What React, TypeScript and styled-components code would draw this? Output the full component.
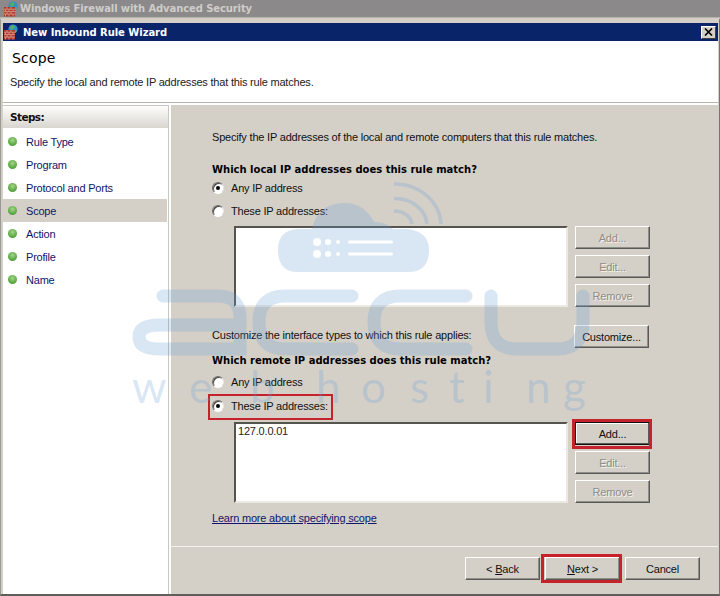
import styled, { createGlobalStyle } from 'styled-components';

const GlobalStyle = createGlobalStyle`
  html, body { margin: 0; padding: 0; background: #d4d0c8; }
  * { box-sizing: border-box; }
`;

const uiFont = `"Liberation Sans", sans-serif`;
const boldFont = `"DejaVu Sans", "Liberation Sans", sans-serif`;

const Page = styled.div`
  position: relative;
  width: 720px;
  height: 596px;
  overflow: hidden;
  display: flex;
  flex-direction: column;
  background: #d4d0c8;
  font-family: ${uiFont};
  font-size: 11px;
  letter-spacing: -0.2px;
  color: #111;
`;

const ParentBar = styled.div`
  height: 18px;
  flex: none;
  display: flex;
  align-items: center;
  gap: 0;
  padding-left: 3px;
  background: #8b8989;
  border-bottom: 1px solid #b5b2ab;
  color: #cfcdc9;
  font-family: ${boldFont};
  font-size: 10px;
  font-weight: 700;
  letter-spacing: -0.1px;
`;

const WindowFrame = styled.div`
  flex: 1;
  min-height: 0;
  display: flex;
  flex-direction: column;
  border-top: 2px solid #d4d0c8;
  border-left: 1px solid #9a9a96;
  border-right: 1px solid #77756f;
  border-bottom: 2px solid #5f5e5a;
  background: #d4d0c8;
  padding: 3px 1px 0 2px;
`;

const TitleBar = styled.div`
  height: 18px;
  flex: none;
  display: flex;
  align-items: center;
  padding: 0 2px 0 0;
  gap: 3px;
  background: #0a246a;
  color: #fff;
  font-family: ${boldFont};
  font-size: 10px;
  font-weight: 700;
  letter-spacing: -0.05px;
`;

const TitleText = styled.span`
  flex: 1;
`;

const CloseButton = styled.div`
  width: 15px;
  height: 13px;
  display: flex;
  align-items: center;
  justify-content: center;
  background: #d4d0c8;
  border: 1px solid;
  border-color: #fff #404040 #404040 #fff;
`;

const WizardHeader = styled.div`
  height: 62px;
  flex: none;
  background: #fff;
  border-bottom: 1px solid #b8b5ad;
  padding: 8px 0 0 9px;
`;

const HeaderTitle = styled.div`
  font-family: ${boldFont};
  font-size: 14px;
  letter-spacing: 0.2px;
  line-height: 18px;
  color: #000;
`;

const HeaderText = styled.div`
  margin: 8px 0 0 -2px;
  line-height: 14px;
  color: #222;
`;

const WizardBody = styled.div`
  flex: 1;
  min-height: 0;
  display: flex;
  background: #fff;
`;

const Sidebar = styled.div`
  width: 168px;
  flex: none;
  padding: 2px 2px 0 0;
  background: #fff;
`;

const StepsPane = styled.div`
  height: 100%;
  border-top: 1px solid #c9c6bf;
  border-right: 1px solid #c9c6bf;
`;

const StepsHeader = styled.div`
  height: 22px;
  display: flex;
  align-items: center;
  padding-left: 7px;
  background: linear-gradient(#fdfdfc, #d9d6d0);
  font-family: ${boldFont};
  font-size: 10.5px;
  font-weight: 700;
  letter-spacing: -0.6px;
  color: #111;
  margin-bottom: 2px;
`;

const StepRow = styled.div<{ $active?: boolean }>`
  height: 23px;
  display: flex;
  align-items: center;
  gap: 9px;
  padding-left: 5px;
  margin-right: 1px;
  color: #10166a;
  background: ${(p) => (p.$active ? '#d4d0c8' : 'transparent')};
`;

const StepBullet = styled.span`
  width: 9px;
  height: 9px;
  border-radius: 50%;
  flex: none;
  background: radial-gradient(circle at 50% 35%, #a5d58a, #5cab45 60%, #3f8a33);
`;

const MainPanel = styled.div`
  flex: 1;
  min-width: 0;
  margin-top: 2px;
  display: flex;
  flex-direction: column;
  background: #d4d0c8;
`;

const MainContent = styled.div`
  flex: 1;
  padding: 25px 0 0 41px;
`;

const BodyText = styled.div`
  line-height: 14px;
`;

const Intro = styled(BodyText)`
  height: 14px;
`;

const Heading = styled.div<{ $top: number }>`
  margin-top: ${(p) => p.$top}px;
  line-height: 14px;
  font-family: ${boldFont};
  font-size: 10px;
  font-weight: 700;
  letter-spacing: 0;
  color: #000;
`;

const RadioRow = styled.div<{ $top: number; $marked?: boolean }>`
  position: relative;
  margin-top: ${(p) => p.$top}px;
  height: 14px;
  width: 113px;
  display: flex;
  align-items: center;
  gap: 7px;
  white-space: nowrap;
  ${(p) =>
    p.$marked &&
    `&::before {
      content: '';
      position: absolute;
      box-sizing: border-box;
      left: -4px;
      top: -5px;
      width: 125px;
      height: 26px;
      border: 2.5px solid #c5222b;
    }`}
`;

const RadioCircle = styled.span<{ $checked?: boolean }>`
  width: 12px;
  height: 12px;
  flex: none;
  border-radius: 50%;
  background: #fff;
  border: 1px solid;
  border-color: #6f6d68 #e8e6e1 #fff #6f6d68;
  box-shadow: inset 1px 1px 0 #444;
  display: flex;
  align-items: center;
  justify-content: center;
  &::after {
    content: '';
    width: 4px;
    height: 4px;
    border-radius: 50%;
    background: ${(p) => (p.$checked ? '#000' : 'transparent')};
  }
`;

const ListGroup = styled.div<{ $top: number }>`
  margin: ${(p) => p.$top}px 0 0 22px;
  display: flex;
  gap: 7px;
`;

const ListBox = styled.div`
  width: 334px;
  height: 81px;
  background: #fff;
  border: 2px solid;
  border-color: #55544f #ece9e3 #ece9e3 #55544f;
  padding: 0 2px;
  line-height: 14px;
  color: #222;
`;

const ButtonColumn = styled.div`
  display: flex;
  flex-direction: column;
  gap: 6px;
`;

const WinButton = styled.div<{ $disabled?: boolean; $focused?: boolean; $ring?: string }>`
  position: relative;
  width: 75px;
  height: 23px;
  flex: none;
  display: flex;
  align-items: center;
  justify-content: center;
  background: #d4d0c8;
  border: 1px solid;
  border-color: ${(p) => (p.$focused ? '#111' : '#fff #5a5955 #5a5955 #fff')};
  box-shadow: ${(p) =>
    p.$focused ? 'inset -1px -1px 0 #5a5955, inset 1px 1px 0 #fff' : 'inset -1px -1px 0 #8f8d87'};
  color: ${(p) => (p.$disabled ? '#8f8d87' : '#111')};
  text-shadow: ${(p) => (p.$disabled ? '1px 1px 0 #f4f3ef' : 'none')};
  ${(p) =>
    p.$ring &&
    `&::before {
      content: '';
      position: absolute;
      inset: ${p.$ring};
      border: 3px solid #c5222b;
    }`}
`;

const CustomizeRow = styled.div`
  margin-top: 18px;
  width: 437px;
  display: flex;
  justify-content: space-between;
`;

const CustomizeText = styled(BodyText)`
  padding-top: 3px;
`;

const LearnLink = styled.a`
  display: block;
  margin-top: 8px;
  line-height: 14px;
  color: #10166a;
  text-decoration: underline;
`;

const Footer = styled.div`
  height: 48px;
  flex: none;
  display: flex;
  justify-content: flex-end;
  gap: 5px;
  padding: 10px 18px 0 0;
  border-top: 1px solid #f4f3ef;
`;

const Underlined = styled.span`
  text-decoration: underline;
`;

const Watermark = styled.svg`
  position: absolute;
  left: 0;
  top: 0;
  width: 720px;
  height: 596px;
  pointer-events: none;
`;

const WatermarkText = styled.text`
  font-family: Lato, "Open Sans", sans-serif;
  font-size: 44px;
  font-weight: 400;
`;

function FirewallIcon() {
  return (
    <svg width="17" height="16" viewBox="0 0 17 16">
      <circle cx="10" cy="5" r="4.6" fill="#2f8fd0" />
      <path d="M7 2.5 10 1l2 2-2 2-2 1zM12 6l2 .5-1.5 2.5-1-1z" fill="#58b05a" />
      <rect x="1" y="6" width="11" height="9.5" fill="#a83a2c" />
      <path d="M1 8.2h11M1 10.6h11M1 13h11M4 6v2.2M8 6v2.2M2.5 8.2v2.4M6 8.2v2.4M10 8.2v2.4M4 10.6V13M8 10.6V13M2.5 13v2.5M6 13v2.5M10 13v2.5" stroke="#e0a08c" strokeWidth="0.8" fill="none" />
    </svg>
  );
}

const steps = ['Rule Type', 'Program', 'Protocol and Ports', 'Scope', 'Action', 'Profile', 'Name'];

export default function App() {
  const brand = 'rgba(104,156,212,0.25)';
  return (
    <Page>
      <GlobalStyle />
      <ParentBar>
        <FirewallIcon />
        Windows Firewall with Advanced Security
      </ParentBar>
      <WindowFrame>
        <TitleBar>
          <FirewallIcon />
          <TitleText>New Inbound Rule Wizard</TitleText>
          <CloseButton>
            <svg width="9" height="8" viewBox="0 0 9 8">
              <path d="M1 0.5 8 7.5M8 0.5 1 7.5" stroke="#000" strokeWidth="1.6" />
            </svg>
          </CloseButton>
        </TitleBar>
        <WizardHeader>
          <HeaderTitle>Scope</HeaderTitle>
          <HeaderText>Specify the local and remote IP addresses that this rule matches.</HeaderText>
        </WizardHeader>
        <WizardBody>
          <Sidebar>
            <StepsPane>
              <StepsHeader>Steps:</StepsHeader>
              {steps.map((step) => (
                <StepRow key={step} $active={step === 'Scope'}>
                  <StepBullet />
                  {step}
                </StepRow>
              ))}
            </StepsPane>
          </Sidebar>
          <MainPanel>
            <MainContent>
              <Intro>Specify the IP addresses of the local and remote computers that this rule matches.</Intro>
              <Heading $top={19}>Which local IP addresses does this rule match?</Heading>
              <RadioRow $top={4}>
                <RadioCircle $checked />
                Any IP address
              </RadioRow>
              <RadioRow $top={9}>
                <RadioCircle />
                These IP addresses:
              </RadioRow>
              <ListGroup $top={8}>
                <ListBox />
                <ButtonColumn>
                  <WinButton $disabled>Add...</WinButton>
                  <WinButton $disabled>Edit...</WinButton>
                  <WinButton $disabled>Remove</WinButton>
                </ButtonColumn>
              </ListGroup>
              <CustomizeRow>
                <CustomizeText>Customize the interface types to which this rule applies:</CustomizeText>
                <WinButton>Customize...</WinButton>
              </CustomizeRow>
              <Heading $top={6}>Which remote IP addresses does this rule match?</Heading>
              <RadioRow $top={7}>
                <RadioCircle />
                Any IP address
              </RadioRow>
              <RadioRow $top={10} $marked>
                <RadioCircle $checked />
                These IP addresses:
              </RadioRow>
              <ListGroup $top={9}>
                <ListBox>127.0.0.01</ListBox>
                <ButtonColumn>
                  <WinButton $focused $ring="-4px -3px -5px -4px">Add...</WinButton>
                  <WinButton $disabled>Edit...</WinButton>
                  <WinButton $disabled>Remove</WinButton>
                </ButtonColumn>
              </ListGroup>
              <LearnLink>Learn more about specifying scope</LearnLink>
            </MainContent>
            <Footer>
              <WinButton>
                &lt;&nbsp;<Underlined>B</Underlined>ack
              </WinButton>
              <WinButton $ring="-4px -3px -4px -5px">
                <Underlined>N</Underlined>ext &gt;
              </WinButton>
              <WinButton>Cancel</WinButton>
            </Footer>
          </MainPanel>
        </WizardBody>
      </WindowFrame>
      <Watermark viewBox="0 0 720 596">
        <path
          fill={brand}
          d="M300 272H298Q278 272 278 250Q278 230 298 229H312Q318 203 345 203Q364 203 374 222Q386 222 393 229H408Q429 232 429 250Q429 272 408 272Z"
        />
        <g fill="#fff">
          <circle cx="317" cy="242" r="4" />
          <circle cx="328" cy="242" r="3" />
          <circle cx="338" cy="242" r="2" />
          <rect x="348" y="240.5" width="45" height="3" rx="1.5" />
          <circle cx="317" cy="254" r="4" />
          <circle cx="328" cy="254" r="3" />
          <circle cx="338" cy="254" r="2" />
          <rect x="348" y="252.5" width="45" height="3" rx="1.5" />
        </g>
        <g fill="none" stroke={brand} strokeWidth="3.5">
          <path d="M394 184A46 42 0 0 1 441 224" />
          <path d="M394 198.500A32 28 0 0 1 427 224" />
          <path d="M394 211A18 14 0 0 1 412 224" />
        </g>
        <g fill="none" stroke={brand} strokeWidth="13" strokeLinecap="round">
          <path d="M163 296H218Q240 296 240 318V349H160Q139 349 139 337Q139 325 160 325H240" />
          <path d="M352 296H285Q259 296 259 322Q259 349 285 349H352" />
          <path d="M466 296H400Q374 296 374 322Q374 349 400 349H466" />
          <path d="M491 296V322Q491 349 517 349H557Q583 349 583 322V296" />
        </g>
        <WatermarkText fill={brand} y="403" x="132 189 250 316 361 410 449 483 526 563">
          webhosting
        </WatermarkText>
      </Watermark>
    </Page>
  );
}
